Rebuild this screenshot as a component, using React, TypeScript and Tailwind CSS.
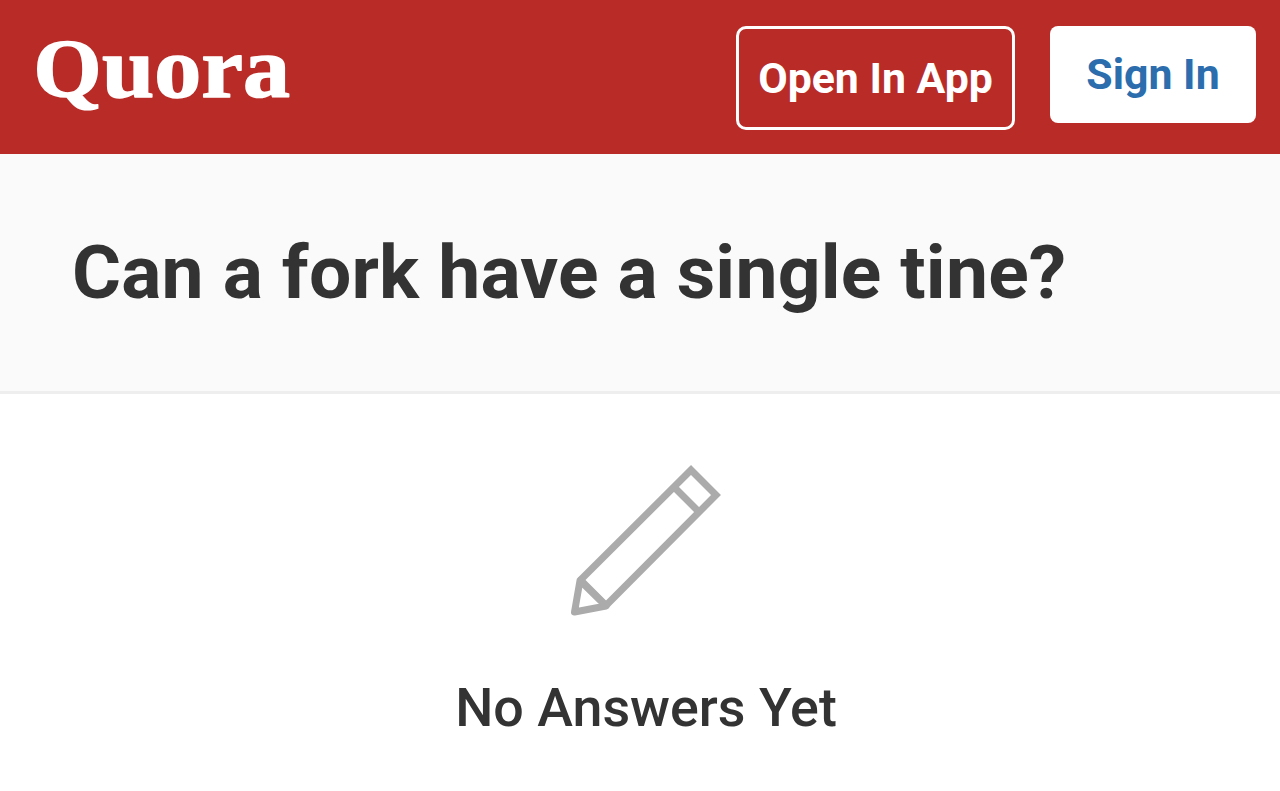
function Logo() {
  return (
    <svg
      width="280"
      height="130"
      role="img"
      strokeWidth="1.5"
      strokeLinejoin="round"
      className="ml-6 fill-white stroke-white font-['Liberation_Serif',serif] font-bold"
    >
      <text
        x="9.5"
        y="95.5"
        textLength="68"
        lengthAdjust="spacingAndGlyphs"
        className="text-[82px]"
      >
        Q
      </text>
      <text
        x="78"
        y="97"
        textLength="188"
        lengthAdjust="spacingAndGlyphs"
        className="text-[87px]"
      >
        uora
      </text>
    </svg>
  );
}

function Pencil() {
  return (
    <svg
      width="160"
      height="160"
      viewBox="565 460 160 160"
      fill="none"
      stroke="#ababab"
      strokeWidth="7"
    >
      <path d="M580.5 580 L691 470 L716 495 L606 605.5" />
      <path d="M674 487 L699 512 M580.5 580 L606 605.5" />
      <path
        d="M580 580.5 L574.5 612 L606 606 Z"
        strokeWidth="7"
        strokeLinejoin="round"
      />
    </svg>
  );
}

export default function App() {
  return (
    <div className="flex h-[791px] w-[1280px] flex-col overflow-hidden bg-white font-['Roboto',sans-serif] text-[#333]">
      <header className="flex h-[154px] items-start bg-[#b92b27]">
        <Logo />
        <div className="mt-[26px] mr-6 ml-auto flex items-start gap-[35px]">
          <button
            type="button"
            className="h-[104px] w-[279px] rounded-[10px] border-[3px] border-white text-[42.8px] font-bold whitespace-nowrap text-white"
          >
            Open In App
          </button>
          <button
            type="button"
            className="h-[97px] w-[206px] rounded-lg bg-white text-[42.8px] font-bold whitespace-nowrap text-[#2b6dad]"
          >
            Sign In
          </button>
        </div>
      </header>
      <section className="h-60 border-b-[3px] border-[#eee] bg-[#fafafa] px-[72px] pt-[75px]">
        <h1 className="text-[75px] leading-[87px] font-bold tracking-[0.2px] whitespace-nowrap">
          Can a fork have a single tine?
        </h1>
      </section>
      <main className="flex flex-col items-center pt-[66px] pl-[10px]">
        <Pencil />
        <h2 className="mt-[57px] pl-0.5 text-[53.8px] leading-[62px] font-medium whitespace-nowrap">
          No Answers Yet
        </h2>
      </main>
    </div>
  );
}
